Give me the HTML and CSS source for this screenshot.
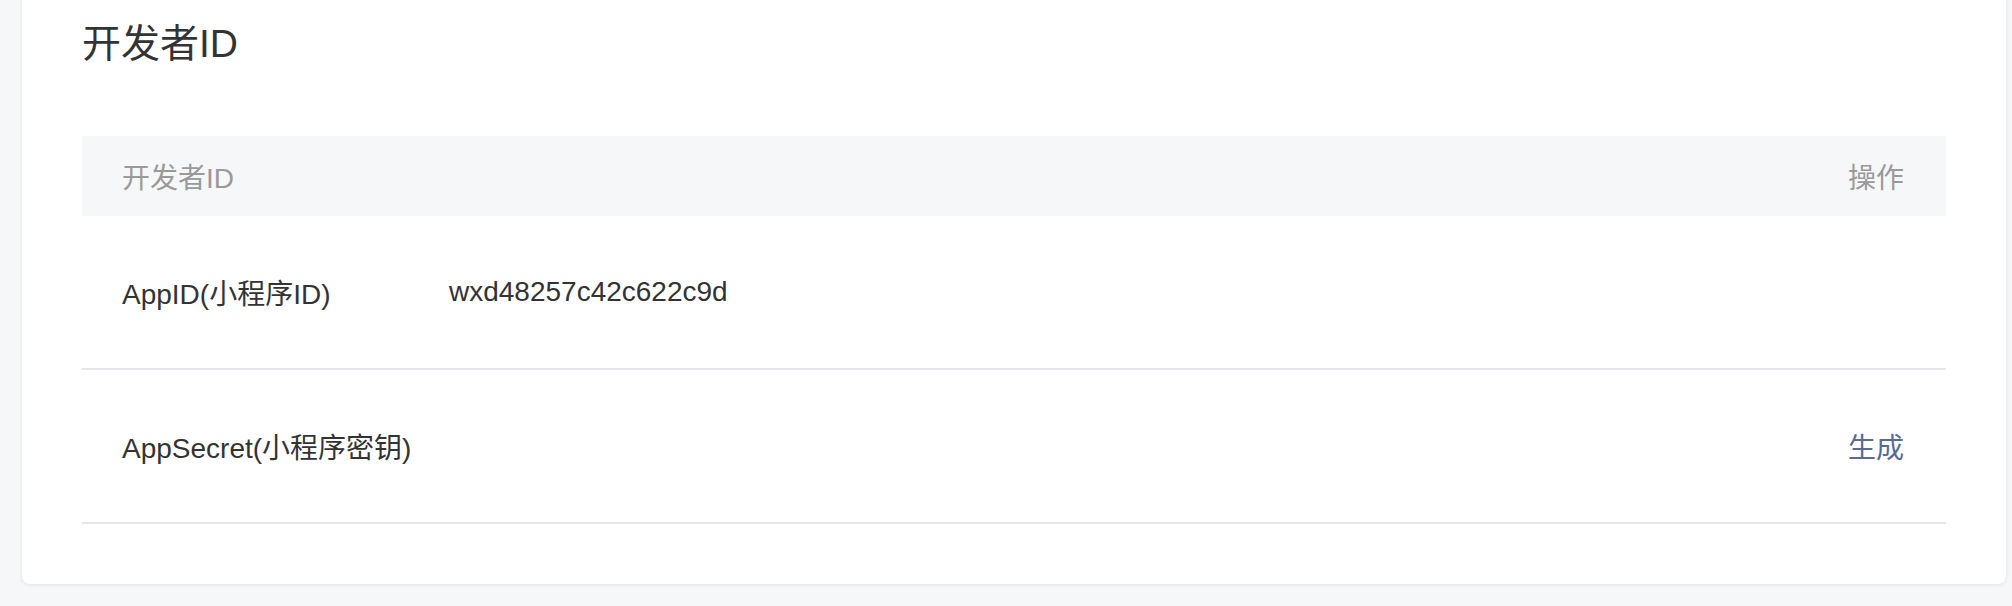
FILE: index.html
```html
<!DOCTYPE html>
<html lang="zh-CN">
<head>
<meta charset="utf-8">
<title>开发者ID</title>
<link rel="stylesheet" href="styles.css">
</head>
<body>
  <div class="page">
    <section class="card">
      <h2 class="card-title">开发者ID</h2>
      <div class="table">
        <div class="row head">
          <div class="cell">开发者ID</div>
          <div class="cell"></div>
          <div class="cell op">操作</div>
        </div>
        <div class="row body">
          <div class="cell">AppID(小程序ID)</div>
          <div class="cell">wxd48257c42c622c9d</div>
          <div class="cell op"></div>
        </div>
        <div class="row body">
          <div class="cell">AppSecret(小程序密钥)</div>
          <div class="cell"></div>
          <div class="cell op"><a class="link" href="#">生成</a></div>
        </div>
      </div>
    </section>
  </div>
</body>
</html>
```

FILE: styles.css
```css
* { box-sizing: border-box; }

html, body {
  margin: 0;
  padding: 0;
  background: #f6f7f9;
  font-family: "Liberation Sans", "Noto Sans CJK SC", sans-serif;
  color: #333;
}

.page {
  padding: 0 6px 0 22px;
  overflow: hidden;
  height: 606px;
}

.card {
  margin-top: -20px;
  width: 1984px;
  background: #fff;
  border-radius: 8px;
  box-shadow: 0 1px 4px rgba(0, 0, 0, 0.09);
  padding: 36px 60px 60px;
}

.card-title {
  margin: 0 0 64px;
  font-weight: normal;
  font-size: 39px;
  line-height: 56px;
  color: #333;
}

.table {
  display: flex;
  flex-direction: column;
}

.row {
  display: grid;
  grid-template-columns: 327px 1fr auto;
  align-items: center;
  padding: 0 42px 0 40px;
  font-size: 28px;
}

.row.head {
  height: 80px;
  background: #f6f7f9;
  color: #9a9a9a;
}

.row.body {
  height: 154px;
  border-bottom: 2px solid #e7e7eb;
  color: #333;
}

.op {
  text-align: right;
}

.link {
  color: #576b95;
  text-decoration: none;
}
```
